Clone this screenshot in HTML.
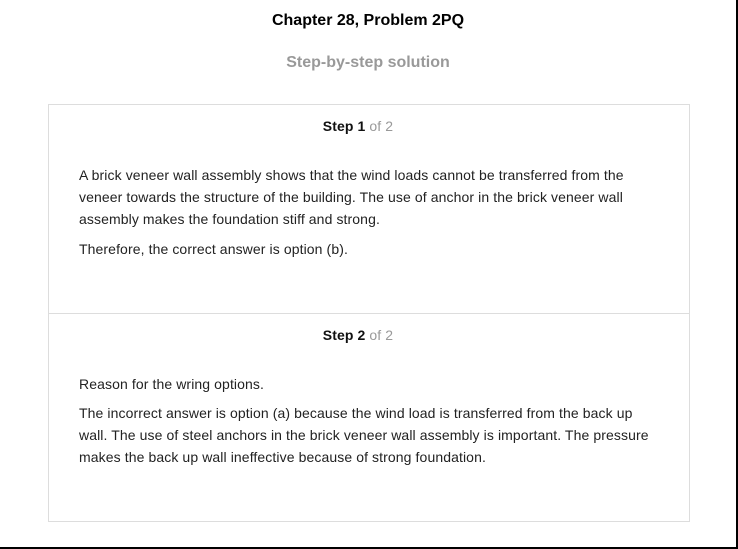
<!DOCTYPE html>
<html><head><meta charset="utf-8"><style>
*{margin:0;padding:0;box-sizing:border-box}
html,body{width:738px;height:549px;background:#fff;overflow:hidden}
body{position:relative;font-family:"Liberation Sans",Arial,sans-serif;color:#222}
.frame{position:absolute;left:0;top:0;width:738px;height:549px;border-right:2px solid #000;border-bottom:2px solid #000}
.t{position:absolute;left:0;width:736px;text-align:center;font-weight:bold;font-size:16px}
.box{position:absolute;left:48px;top:104px;width:642px;height:418px;border:1px solid #ddd}
.div{position:absolute;left:48px;top:313px;width:642px;height:1px;background:#ddd}
.step{position:absolute;left:37px;width:642px;text-align:center;font-size:14px;letter-spacing:0.1px;color:#111}
.step b{font-weight:bold}.step span{color:#999}
.p{position:absolute;left:79px;width:578px;font-size:14px;letter-spacing:0.1px;line-height:22px;color:#222}
</style></head><body>
<div class="frame"></div>
<div class="t" style="top:12px;color:#000">Chapter 28, Problem 2PQ</div>
<div class="t" style="top:54px;color:#999">Step-by-step solution</div>
<div class="box"></div>
<div class="div"></div>
<div class="step" style="top:118px"><b>Step 1</b> <span>of 2</span></div>
<div class="p" style="top:164px">A brick veneer wall assembly shows that the wind loads cannot be transferred from the<br>veneer towards the structure of the building. The use of anchor in the brick veneer wall<br>assembly makes the foundation stiff and strong.</div>
<div class="p" style="top:238px">Therefore, the correct answer is option (b).</div>
<div class="step" style="top:327px"><b>Step 2</b> <span>of 2</span></div>
<div class="p" style="top:373px">Reason for the wring options.</div>
<div class="p" style="top:402px">The incorrect answer is option (a) because the wind load is transferred from the back up<br>wall. The use of steel anchors in the brick veneer wall assembly is important. The pressure<br>makes the back up wall ineffective because of strong foundation.</div>
</body></html>
